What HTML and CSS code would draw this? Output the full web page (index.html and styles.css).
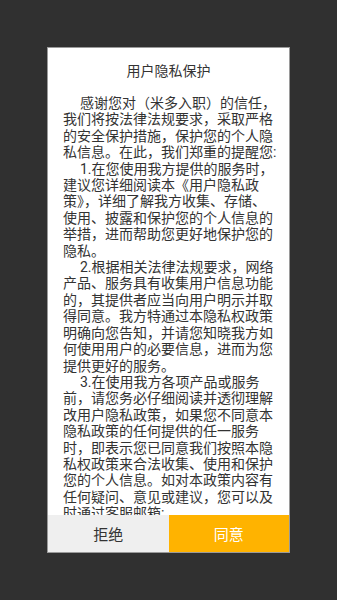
FILE: index.html
```html
<!DOCTYPE html>
<html lang="zh-CN">
<head>
  <meta charset="UTF-8" />
  <meta name="viewport" content="width=device-width, initial-scale=1.0" />
  <title>用户隐私保护</title>
  <link rel="stylesheet" href="styles.css">
</head>
<body>
  <div class="dialog">
    <h2 class="dialog-title">用户隐私保护</h2>
    <div class="dialog-body">
      <p>感谢您对（米多入职）的信任，<br>我们将按法律法规要求，采取严格<br>的安全保护措施，保护您的个人隐<br>私信息。在此，我们郑重的提醒您:</p>
      <p>1.在您使用我方提供的服务时，<br>建议您详细阅读本《用户隐私政<br>策》，详细了解我方收集、存储、<br>使用、披露和保护您的个人信息的<br>举措，进而帮助您更好地保护您的<br>隐私。</p>
      <p>2.根据相关法律法规要求，网络<br>产品、服务具有收集用户信息功能<br>的，其提供者应当向用户明示并取<br>得同意。我方特通过本隐私权政策<br>明确向您告知，并请您知晓我方如<br>何使用用户的必要信息，进而为您<br>提供更好的服务。</p>
      <p>3.在使用我方各项产品或服务<br>前，请您务必仔细阅读并透彻理解<br>改用户隐私政策，如果您不同意本<br>隐私政策的任何提供的任一服务<br>时，即表示您已同意我们按照本隐<br>私权政策来合法收集、使用和保护<br>您的个人信息。如对本政策内容有<br>任何疑问、意见或建议，您可以及<br>时通过客服邮箱:</p>
    </div>
    <div class="dialog-actions">
      <button class="btn btn-refuse">拒绝</button>
      <button class="btn btn-agree">同意</button>
    </div>
  </div>
</body>
</html>
```

FILE: styles.css
```css
html, body {
  margin: 0;
  height: 100%;
}
body {
  background: #303030;
  font-family: Roboto, "Noto Sans CJK SC", sans-serif;
  display: flex;
  align-items: center;
  justify-content: center;
}
.dialog {
  box-sizing: border-box;
  width: 243px;
  height: 506px;
  background: #fff;
  border: 1px solid #9a9a9a;
  display: flex;
  flex-direction: column;
  color: #333;
}
.dialog-title {
  margin: 0;
  padding: 15px 0 16px;
  font-size: 14px;
  line-height: 16px;
  font-weight: normal;
  text-align: center;
}
.dialog-body {
  flex: 1;
  overflow: hidden;
  padding: 0 15px;
  font-size: 14px;
  line-height: 16.4px;
}
.dialog-body p {
  margin: 0;
  text-indent: 17px;
  white-space: nowrap;
}
.dialog-actions {
  display: flex;
  height: 37px;
}
.btn {
  flex: 1;
  border: none;
  margin: 0;
  padding: 0;
  font-family: inherit;
  font-size: 15px;
  cursor: pointer;
}
.btn-refuse {
  background: #efefef;
  color: #333;
}
.btn-agree {
  background: #ffb300;
  color: #fff;
}
```
